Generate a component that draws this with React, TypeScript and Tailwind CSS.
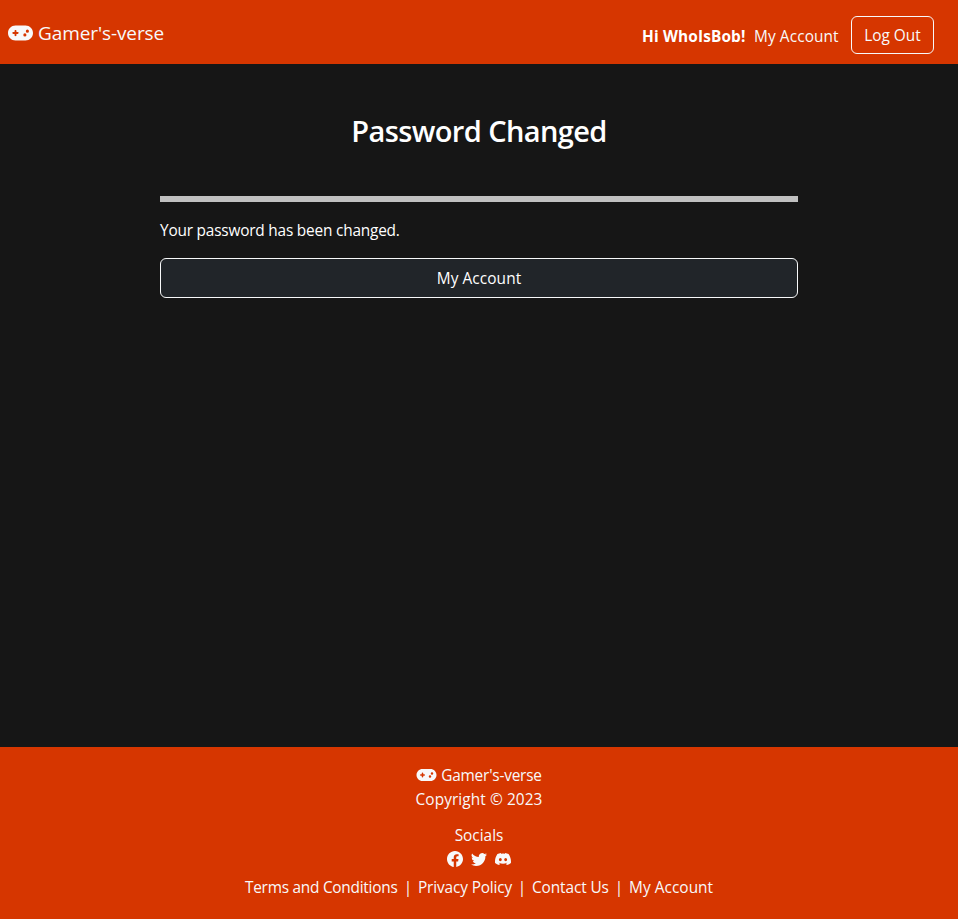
import { FaGamepad } from "react-icons/fa6";
import { BsDiscord, BsFacebook, BsTwitter } from "react-icons/bs";

const footerLinks = [
  { label: "Terms and Conditions", size: "w-[153px] tracking-[-0.25px]" },
  { label: "Privacy Policy", size: "w-[94px] tracking-[-0.14px]" },
  { label: "Contact Us", size: "w-[77px] tracking-[-0.1px]" },
  { label: "My Account", size: "w-[84px] tracking-[0.05px]" },
];

function Header() {
  return (
    <header className="flex h-16 shrink-0 items-start justify-between bg-[#d63600] pl-2 pr-6 text-[#f8f9fa]">
      <a href="#" className="mt-[18px] flex h-[30px] items-center text-[19px] leading-[30px]">
        <FaGamepad className="-mt-px mr-[5px] h-5 w-[25px]" />
        <span className="tracking-[-0.1px]">Gamer's-verse</span>
      </a>
      <div className="mt-4 flex items-start whitespace-nowrap">
        <strong className="mt-[9px] w-[104px] font-bold tracking-[0.15px] text-white">Hi WhoIsBob!</strong>
        <a href="#" className="ml-2 mt-[9px] w-[85px] tracking-[0.1px]">My Account</a>
        <button className="ml-3 h-[38px] w-[83px] rounded-md border border-[#f8f9fa] pt-0.5 leading-6">Log Out</button>
      </div>
    </header>
  );
}

function Footer() {
  return (
    <footer className="flex h-[172px] shrink-0 flex-col items-center bg-[#d63600] pt-[17px] text-[#f8f9fa]">
      <div className="flex h-6 items-center">
        <FaGamepad className="-mt-0.5 mr-1 h-4 w-[21px]" />
        <span className="tracking-[-0.2px]">Gamer's-verse</span>
      </div>
      <div className="tracking-[0.08px]">Copyright © 2023</div>
      <div className="mt-3">Socials</div>
      <div className="-mt-px flex h-6 items-center gap-2">
        <BsFacebook className="size-4" />
        <BsTwitter className="size-4" />
        <BsDiscord className="size-4" />
      </div>
      <nav className="mt-[5px] flex whitespace-nowrap">
        {footerLinks.map((link, index) => (
          <div key={link.label} className="flex">
            {index > 0 && <span className="w-5 text-center">|</span>}
            <a href="#" className={link.size}>{link.label}</a>
          </div>
        ))}
      </nav>
    </footer>
  );
}

export default function App() {
  return (
    <div className="flex h-[919px] flex-col bg-[#161616] font-['Open_Sans','Noto_Sans',sans-serif] text-[15.4px] leading-6 text-white">
      <Header />
      <main className="mx-auto w-[638px] flex-1">
        <h1 className="mt-12 text-center text-[29px] font-semibold leading-[38px] tracking-[-0.6px]">Password Changed</h1>
        <hr className="mt-[46px] h-1.5 border-0 bg-[#c0c0c0]" />
        <p className="mt-[17px] tracking-[-0.2px]">Your password has been changed.</p>
        <button className="mt-[15px] h-10 w-full rounded-md border border-[#f8f9fa] bg-[#212529] pt-0.5 leading-6 tracking-[0.08px]">My Account</button>
      </main>
      <Footer />
    </div>
  );
}
